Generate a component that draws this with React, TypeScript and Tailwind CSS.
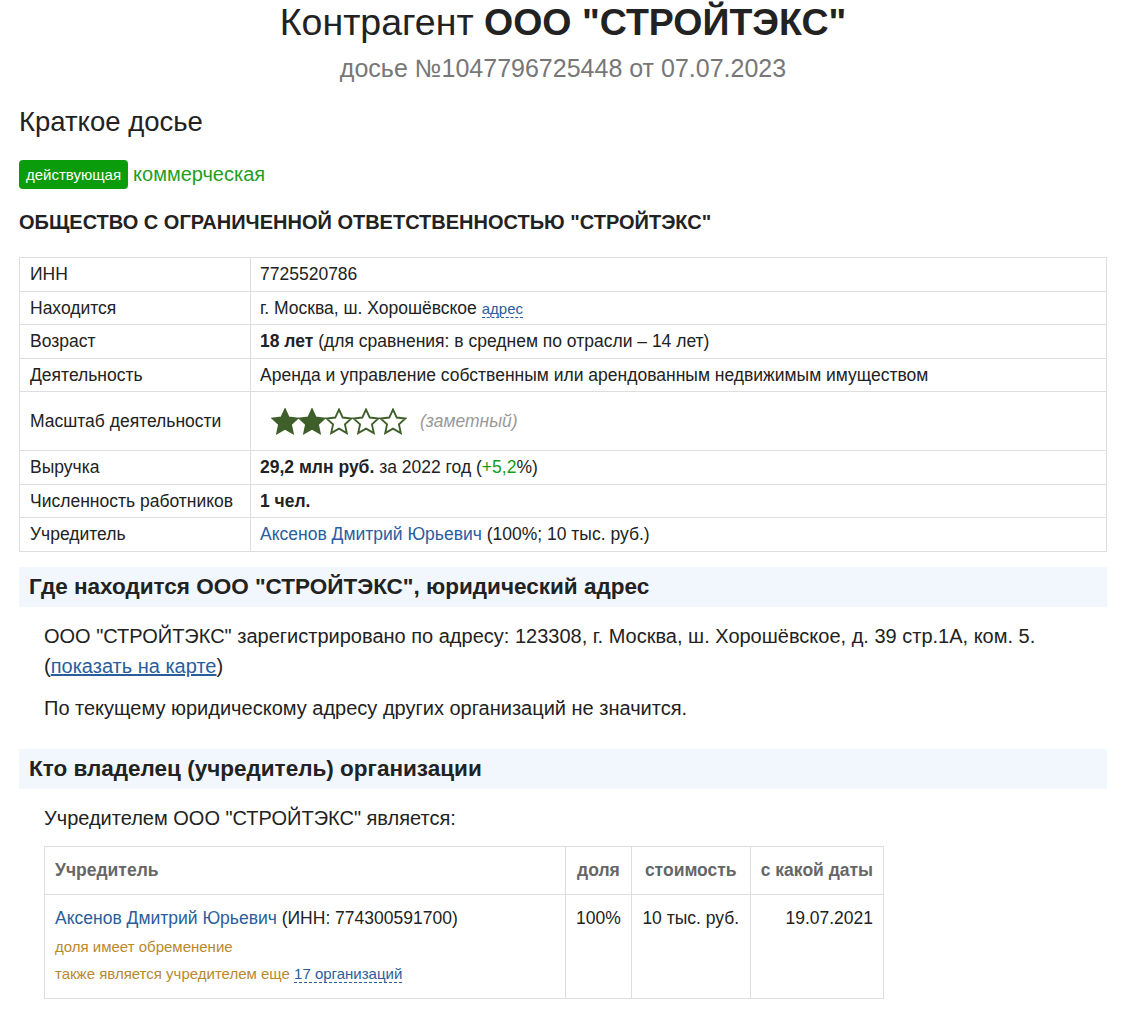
import React from "react";

function Star({ filled }: { filled: boolean }) {
  return (
    <svg width="28" height="27" viewBox="0 0 24 23" className="-mr-[1px]">
      <path
        d="M12 1.2l3.2 6.9 7.5.8-5.6 5.1 1.6 7.4L12 17.6l-6.7 3.8 1.6-7.4-5.6-5.1 7.5-.8z"
        fill={filled ? "#3f5f2a" : "#fff"}
        stroke="#3f5f2a"
        strokeWidth="1.6"
        strokeLinejoin="miter"
      />
    </svg>
  );
}

const rows: { label: string; value: React.ReactNode; tall?: boolean }[] = [
  { label: "ИНН", value: "7725520786" },
  {
    label: "Находится",
    value: (
      <>
        г. Москва, ш. Хорошёвское{" "}
        <span className="text-[15px] text-[#2a5d9c] border-b border-dashed border-[#2a5d9c]">адрес</span>
      </>
    ),
  },
  {
    label: "Возраст",
    value: (
      <>
        <b>18 лет</b> (для сравнения: в среднем по отрасли – 14 лет)
      </>
    ),
  },
  { label: "Деятельность", value: "Аренда и управление собственным или арендованным недвижимым имуществом" },
  {
    label: "Масштаб деятельности",
    tall: true,
    value: (
      <div className="flex items-center pl-[11px]">
        <div className="flex">
          <Star filled />
          <Star filled />
          <Star filled={false} />
          <Star filled={false} />
          <Star filled={false} />
        </div>
        <span className="ml-[14px] italic text-[#999]">(заметный)</span>
      </div>
    ),
  },
  {
    label: "Выручка",
    value: (
      <>
        <b>29,2 млн руб.</b> за 2022 год (<span className="text-[#1a9a1a]">+5,2</span>%)
      </>
    ),
  },
  { label: "Численность работников", value: <b>1 чел.</b> },
  {
    label: "Учредитель",
    value: (
      <>
        <span className="text-[#2a5d9c]">Аксенов Дмитрий Юрьевич</span> (100%; 10 тыс. руб.)
      </>
    ),
  },
];

export default function App() {
  return (
    <div className="bg-white text-[#222] font-['Liberation_Sans',Arial,sans-serif] px-[19px] pb-[30px] w-[1126px]">
      <h1 className="text-center text-[37.5px] leading-[42px] pt-[1px]">
        Контрагент <b>ООО "СТРОЙТЭКС"</b>
      </h1>
      <div className="text-center text-[25px] leading-[28px] text-[#777] mt-[11px]">
        досье №1047796725448 от 07.07.2023
      </div>

      <h2 className="text-[27.5px] leading-[30px] mt-[25px]">Краткое досье</h2>

      <div className="flex items-center mt-[22px]">
        <span className="bg-[#0b9c0b] text-white text-[15px] leading-[29px] px-[7px] rounded-[4px]">
          действующая
        </span>
        <span className="text-[#1f9e1f] text-[20px] ml-[5px]">коммерческая</span>
      </div>

      <div className="font-bold text-[20px] leading-[22px] mt-[22px]">
        ОБЩЕСТВО С ОГРАНИЧЕННОЙ ОТВЕТСТВЕННОСТЬЮ "СТРОЙТЭКС"
      </div>

      <table className="w-full border-collapse text-[17.5px] mt-[24px]">
        <tbody>
          {rows.map((r) => (
            <tr key={r.label} className={r.tall ? "h-[59px]" : "h-[33.5px]"}>
              <td className="border border-[#dedede] px-[10px] py-0 w-[231px] align-middle whitespace-nowrap">
                {r.label}
              </td>
              <td className="border border-[#dedede] px-[9px] py-0 align-middle">{r.value}</td>
            </tr>
          ))}
        </tbody>
      </table>

      <h3 className="bg-[#f1f7fc] font-bold text-[22.5px] leading-[40px] px-[10px] mt-[15px]">
        Где находится ООО "СТРОЙТЭКС", юридический адрес
      </h3>
      <div className="px-[25px] text-[20px] leading-[30px] mt-[14px]">
        <p>
          ООО "СТРОЙТЭКС" зарегистрировано по адресу: 123308, г. Москва, ш. Хорошёвское, д. 39 стр.1А, ком. 5.
          <br />(<span className="text-[#2a5d9c] underline">показать на карте</span>)
        </p>
        <p className="mt-[12px]">По текущему юридическому адресу других организаций не значится.</p>
      </div>

      <h3 className="bg-[#f1f7fc] font-bold text-[22.5px] leading-[40px] px-[10px] mt-[26px]">
        Кто владелец (учредитель) организации
      </h3>
      <div className="px-[25px]">
        <p className="text-[20px] leading-[30px] mt-[14px]">Учредителем ООО "СТРОЙТЭКС" является:</p>
        <table className="border-collapse text-[17.5px] mt-[13px]">
          <thead>
            <tr className="h-[48px] text-[#666]">
              <th className="border border-[#dedede] text-left font-bold px-[10px] w-[521px]">Учредитель</th>
              <th className="border border-[#dedede] font-bold px-[10px] w-[65px]">доля</th>
              <th className="border border-[#dedede] font-bold px-[10px] w-[119px]">стоимость</th>
              <th className="border border-[#dedede] font-bold px-[10px] w-[133px] whitespace-nowrap">
                с какой даты
              </th>
            </tr>
          </thead>
          <tbody>
            <tr className="h-[104px] align-top">
              <td className="border border-[#dedede] px-[10px] pt-[10px]">
                <div>
                  <span className="text-[#2a5d9c]">Аксенов Дмитрий Юрьевич</span> (ИНН: 774300591700)
                </div>
                <div className="text-[15px] text-[#b8892e] mt-[5px]">доля имеет обременение</div>
                <div className="text-[15px] text-[#b8892e] mt-[5px]">
                  также является учредителем еще{" "}
                  <span className="text-[#2a5d9c] border-b border-dashed border-[#2a5d9c]">17 организаций</span>
                </div>
              </td>
              <td className="border border-[#dedede] px-[10px] pt-[10px] text-center">100%</td>
              <td className="border border-[#dedede] px-[10px] pt-[10px] text-center whitespace-nowrap">
                10 тыс. руб.
              </td>
              <td className="border border-[#dedede] px-[10px] pt-[10px] text-right">19.07.2021</td>
            </tr>
          </tbody>
        </table>
      </div>
    </div>
  );
}
